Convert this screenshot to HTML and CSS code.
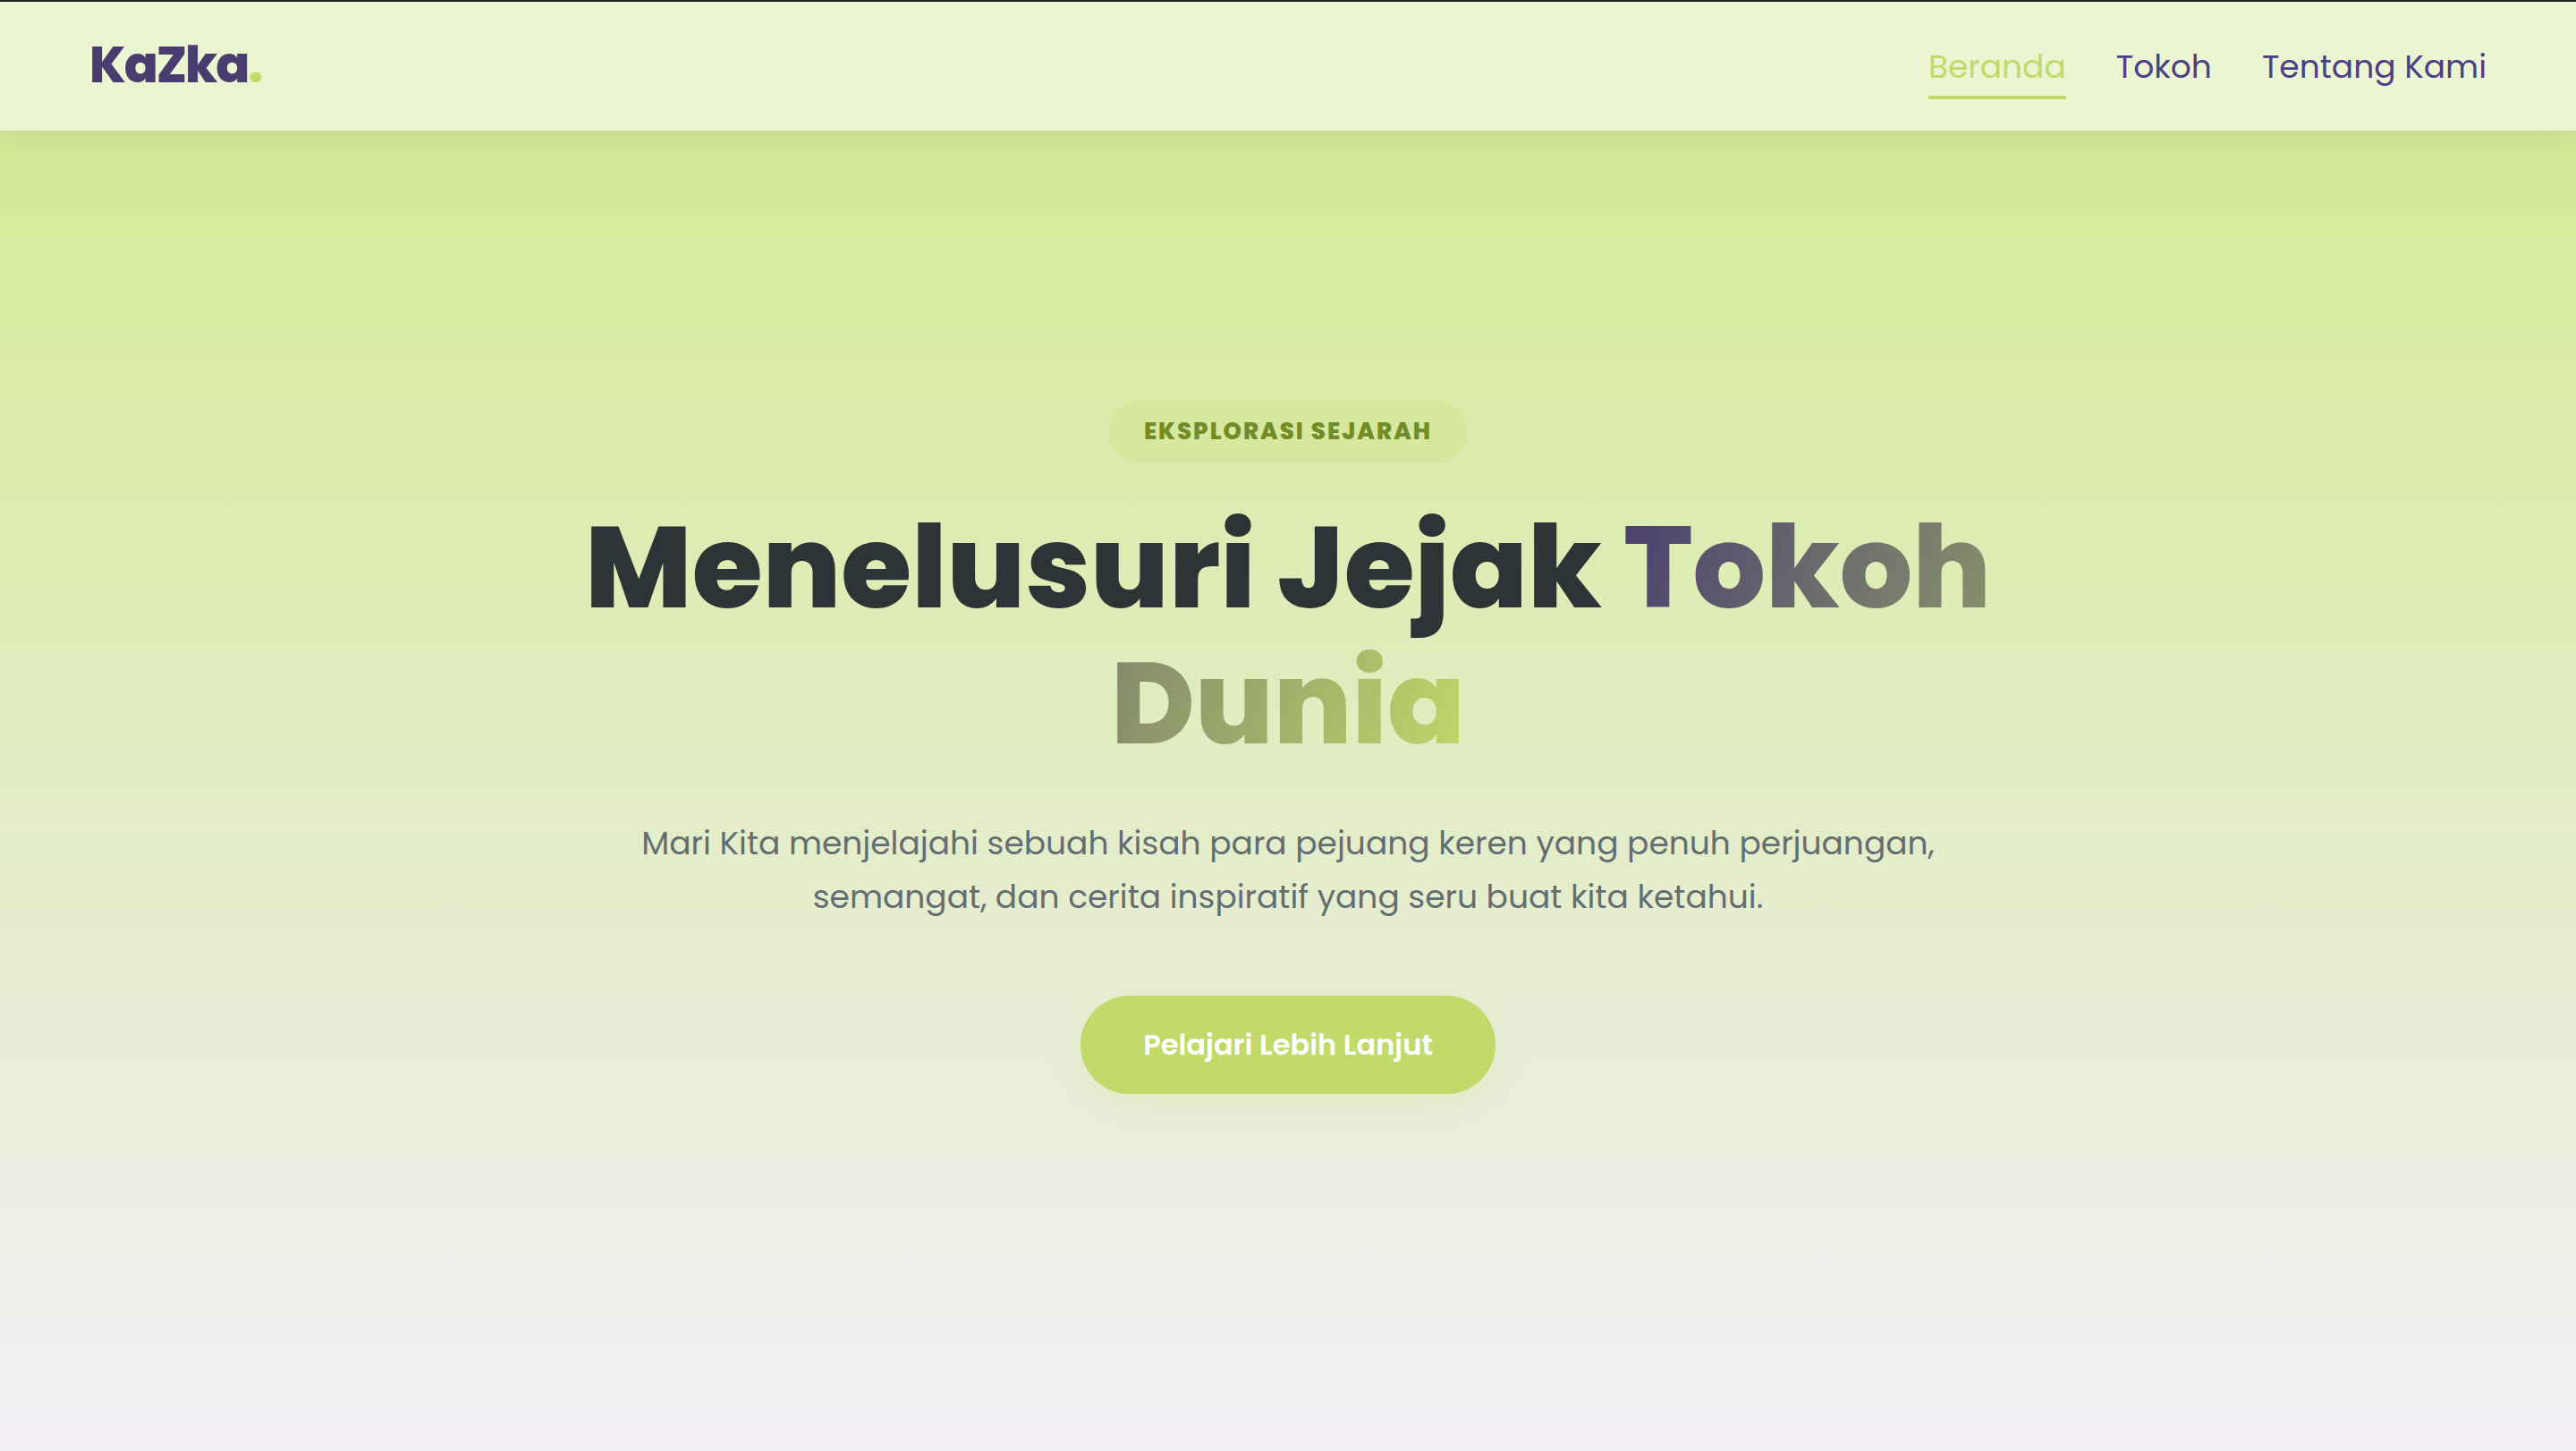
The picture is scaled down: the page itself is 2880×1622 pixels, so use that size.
FILE: index.html
```html
<!DOCTYPE html>
<html lang="id">
<head>
    <meta charset="UTF-8">
    <meta name="viewport" content="width=device-width, initial-scale=1.0">
    <title>KaZka</title>
    <link rel="stylesheet" href="styles.css">
</head>
<body>
    <!-- Header -->
    <header class="header">
        <a href="#" class="logo">KaZka<span class="logo-dot">.</span></a>
        <nav class="nav">
            <a href="#" class="nav-link active">Beranda</a>
            <a href="#tokoh" class="nav-link">Tokoh</a>
            <a href="#tentang" class="nav-link">Tentang Kami</a>
        </nav>
    </header>

    <!-- Hero -->
    <main class="hero">
        <span class="badge">EKSPLORASI SEJARAH</span>
        <h1 class="hero-title">Menelusuri Jejak <span class="gradient-text">Tokoh Dunia</span></h1>
        <p class="hero-text">Mari Kita menjelajahi sebuah kisah para pejuang keren yang penuh perjuangan, semangat, dan cerita inspiratif yang seru buat kita ketahui.</p>
        <a href="#tokoh" class="btn">Pelajari Lebih Lanjut</a>
    </main>
</body>
</html>
```
FILE: styles.css
```css
:root {
    --primary: #483d6e;
    --link: #4b4085;
    --accent: #c1da69;
    --dark: #2d3436;
    --gray: #636e72;
}
* {
    margin: 0;
    padding: 0;
    box-sizing: border-box;
}
body {
    min-height: 100vh;
    font-family: Poppins, Inter, "Open Sans", sans-serif;
    color: var(--dark);
    background: linear-gradient(180deg, #d0ea8b 0%, #f3eff6 100%);
}
a {
    text-decoration: none;
}

/* Header */
.header {
    position: sticky;
    top: 0;
    display: flex;
    justify-content: space-between;
    align-items: center;
    height: 146px;
    padding: 0 100px;
    border-top: 2px solid #232323;
    background: #ebf5d2;
    box-shadow: 0 8px 40px rgba(0, 0, 0, 0.08);
}
.logo {
    padding-bottom: 2px;
    font-size: 56px;
    line-height: 84px;
    font-weight: 800;
    letter-spacing: -2px;
    color: var(--primary);
}
.logo-dot {
    color: var(--accent);
}
.nav {
    display: flex;
    gap: 56px;
}
.nav-link {
    padding: 8px 0 2px;
    border-bottom: 4px solid transparent;
    font-size: 36px;
    line-height: 60px;
    color: var(--link);
}
.nav-link.active {
    color: var(--accent);
    border-bottom-color: var(--accent);
}

/* Hero */
.hero {
    display: flex;
    flex-direction: column;
    align-items: center;
    max-width: 1680px;
    margin: 0 auto;
    padding: 301px 40px 200px;
    text-align: center;
}
.badge {
    padding: 12px 40px 14px;
    border-radius: 40px;
    background: rgba(193, 218, 105, 0.2);
    font-size: 26px;
    line-height: 46px;
    font-weight: 800;
    letter-spacing: 2px;
    color: #728c28;
}
.hero-title {
    margin-top: 40px;
    font-size: 128px;
    line-height: 152px;
    font-weight: 800;
}
.gradient-text {
    background: linear-gradient(110deg, var(--primary), var(--accent));
    -webkit-background-clip: text;
    background-clip: text;
    color: transparent;
}
.hero-text {
    max-width: 1500px;
    margin-top: 50px;
    font-size: 36px;
    line-height: 60px;
    color: var(--gray);
}
.btn {
    margin-top: 80px;
    padding: 31px 70px;
    border-radius: 60px;
    background: var(--accent);
    box-shadow: 0 16px 40px rgba(193, 218, 105, 0.2);
    font-size: 32px;
    line-height: 48px;
    font-weight: 600;
    color: #fff;
}
```
